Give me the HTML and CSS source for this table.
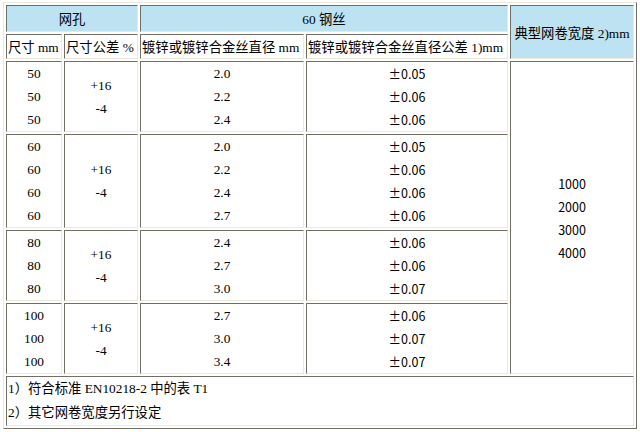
FILE: index.html
```html
<!DOCTYPE html>
<html lang="zh-CN">
<head>
<meta charset="utf-8">
<title>网孔规格表</title>
<link rel="stylesheet" href="styles.css">
</head>
<body>
<table class="spec">
  <colgroup>
    <col class="c1">
    <col class="c2">
    <col class="c3">
    <col class="c4">
    <col class="c5">
  </colgroup>
  <tr class="row-h1">
    <td colspan="2" class="hd">网孔</td>
    <td colspan="2" class="hd">60 钢丝</td>
    <td rowspan="2" class="hd">典型网卷宽度 2)mm</td>
  </tr>
  <tr class="row-h2">
    <td class="sub">尺寸 mm</td>
    <td class="sub">尺寸公差 %</td>
    <td class="sub">镀锌或镀锌合金丝直径 mm</td>
    <td class="sub">镀锌或镀锌合金丝直径公差 1)mm</td>
  </tr>
  <tr class="g70">
    <td class="num">50<br>50<br>50</td>
    <td class="num">+16<br>-4</td>
    <td class="num">2.0<br>2.2<br>2.4</td>
    <td class="pm">±0.05<br>±0.06<br>±0.06</td>
    <td rowspan="4" class="pm">1000<br>2000<br>3000<br>4000</td>
  </tr>
  <tr class="g94">
    <td class="num">60<br>60<br>60<br>60</td>
    <td class="num">+16<br>-4</td>
    <td class="num">2.0<br>2.2<br>2.4<br>2.7</td>
    <td class="pm">±0.05<br>±0.06<br>±0.06<br>±0.06</td>
  </tr>
  <tr class="g71">
    <td class="num">80<br>80<br>80</td>
    <td class="num">+16<br>-4</td>
    <td class="num">2.4<br>2.7<br>3.0</td>
    <td class="pm">±0.06<br>±0.06<br>±0.07</td>
  </tr>
  <tr class="g70">
    <td class="num">100<br>100<br>100</td>
    <td class="num">+16<br>-4</td>
    <td class="num">2.7<br>3.0<br>3.4</td>
    <td class="pm">±0.06<br>±0.07<br>±0.07</td>
  </tr>
  <tr class="foot">
    <td colspan="5" class="note">1）符合标准 EN10218-2 中的表 T1<br>2）其它网卷宽度另行设定</td>
  </tr>
</table>
</body>
</html>
```

FILE: styles.css
```css
html, body {
  margin: 0;
  padding: 0;
  background: #ffffff;
}

body {
  font-family: "Liberation Serif", "Noto Sans CJK SC", serif;
  font-size: 13.33px;
  color: #000000;
}

.spec {
  margin: 2px 0 0 3px;
  border-collapse: separate;
  border-spacing: 2px;
  table-layout: fixed;
  width: 634px;
  border: 1px solid;
  border-color: #ece9d8 #716f64 #716f64 #ece9d8;
}

.c1 { width: 56px; }
.c2 { width: 74px; }
.c3 { width: 164px; }
.c4 { width: 202px; }
.c5 { width: 124px; }

.spec td {
  box-sizing: border-box;
  border: 1px solid;
  border-color: #716f64 #ece9d8 #ece9d8 #716f64;
  padding: 0 1px;
  white-space: nowrap;
  overflow: hidden;
}

.hd {
  background: #bde2f1;
  text-align: center;
}

.row-h1 td { height: 27px; }
.row-h2 td { height: 25px; }

.sub {
  text-align: left;
}

.num, .pm {
  text-align: center;
  vertical-align: middle;
  line-height: 23px;
}

.pm {
  font-family: "Noto Sans CJK SC", sans-serif;
  font-size: 12.5px;
}

.g70 td { height: 70px; }
.g71 td { height: 71px; }
.g94 td { height: 94px; }

.note {
  text-align: left;
  line-height: 24px;
  height: 50px;
}
```
